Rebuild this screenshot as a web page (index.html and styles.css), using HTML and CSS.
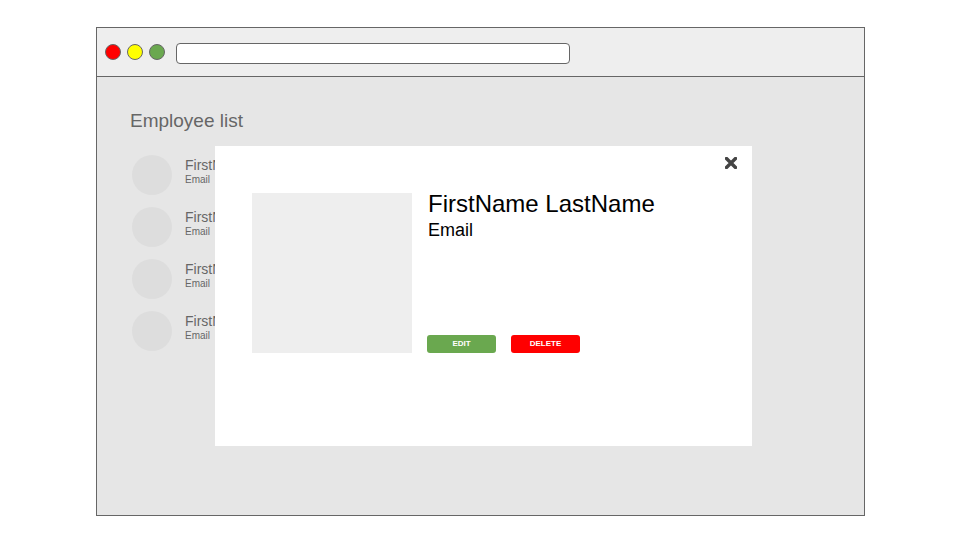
FILE: index.html
```html
<!DOCTYPE html>
<html>
<head>
<meta charset="utf-8">
<link rel="stylesheet" href="styles.css">
</head>
<body>
<div class="window">
  <div class="topbar">
    <span class="dot red"></span>
    <span class="dot yellow"></span>
    <span class="dot green"></span>
    <div class="address"></div>
  </div>
  <div class="content">
    <div class="title">Employee list</div>
    <div class="list">
      <div class="row"><div class="avatar"></div><div class="info"><div class="name">FirstName LastName</div><div class="email">Email</div></div></div>
      <div class="row"><div class="avatar"></div><div class="info"><div class="name">FirstName LastName</div><div class="email">Email</div></div></div>
      <div class="row"><div class="avatar"></div><div class="info"><div class="name">FirstName LastName</div><div class="email">Email</div></div></div>
      <div class="row"><div class="avatar"></div><div class="info"><div class="name">FirstName LastName</div><div class="email">Email</div></div></div>
    </div>
    <div class="modal">
      <svg class="close" width="12" height="12" viewBox="0 0 12 12"><path d="M1.5 1.5 L10.5 10.5 M10.5 1.5 L1.5 10.5" stroke="#444" stroke-width="3.4" stroke-linecap="square"/></svg>
      <div class="photo"></div>
      <div class="details">
        <div class="m-name">FirstName LastName</div>
        <div class="m-email">Email</div>
        <div class="buttons">
          <div class="btn edit">EDIT</div>
          <div class="btn delete">DELETE</div>
        </div>
      </div>
    </div>
  </div>
</div>
</body>
</html>
```

FILE: styles.css
```css
html, body {
  margin: 0;
  padding: 0;
  background: #ffffff;
  font-family: "Liberation Sans", Arial, sans-serif;
}

.window {
  box-sizing: border-box;
  margin: 27px 0 0 96px;
  width: 769px;
  height: 489px;
  border: 1px solid #666666;
  display: flex;
  flex-direction: column;
}

.topbar {
  height: 48px;
  border-bottom: 1px solid #666666;
  background: #eeeeee;
  display: flex;
  align-items: center;
  padding-left: 8px;
  box-sizing: content-box;
}

.dot {
  box-sizing: border-box;
  width: 16px;
  height: 16px;
  border-radius: 50%;
  border: 1px solid #666666;
  margin-right: 6px;
}
.red { background: #ff0000; }
.yellow { background: #ffff00; }
.green { background: #6aa84f; margin-right: 11px; }

.address {
  box-sizing: border-box;
  width: 394px;
  height: 21px;
  margin-top: 2px;
  border: 1px solid #666666;
  border-radius: 4px;
  background: #ffffff;
}

.content {
  flex: 1;
  background: #e6e6e6;
  position: relative;
  padding: 33px 0 0 33px;
  overflow: hidden;
}

.title {
  font-size: 19px;
  line-height: 22px;
  color: #666666;
}

.list {
  margin: 23px 0 0 2px;
  display: flex;
  flex-direction: column;
  gap: 12px;
}

.row {
  display: flex;
  height: 40px;
  gap: 13px;
}

.avatar {
  width: 40px;
  height: 40px;
  border-radius: 50%;
  background: #dddddd;
}

.info {
  padding-top: 2px;
  color: #666666;
}

.name {
  font-size: 14px;
  line-height: 16px;
}

.email {
  font-size: 10px;
  line-height: 12px;
  margin-top: 1px;
}

.modal {
  position: absolute;
  left: 118px;
  top: 69px;
  width: 537px;
  height: 300px;
  background: #ffffff;
  box-sizing: border-box;
  padding: 47px 0 0 37px;
  display: flex;
  gap: 16px;
}

.close {
  position: absolute;
  right: 15px;
  top: 11px;
}

.photo {
  width: 160px;
  height: 160px;
  background: #eeeeee;
}

.details {
  display: flex;
  flex-direction: column;
  height: 160px;
  color: #000000;
}

.m-name {
  font-size: 24px;
  line-height: 24px;
  margin-top: -1px;
}

.m-email {
  font-size: 18px;
  line-height: 22px;
  margin-top: 3px;
}

.buttons {
  margin-top: auto;
  margin-left: -1px;
  display: flex;
  gap: 15px;
}

.btn {
  width: 69px;
  height: 18px;
  border-radius: 3px;
  color: #ffffff;
  font-size: 8px;
  font-weight: bold;
  line-height: 18px;
  text-align: center;
}
.edit { background: #6aa84f; }
.delete { background: #ff0000; }
```
